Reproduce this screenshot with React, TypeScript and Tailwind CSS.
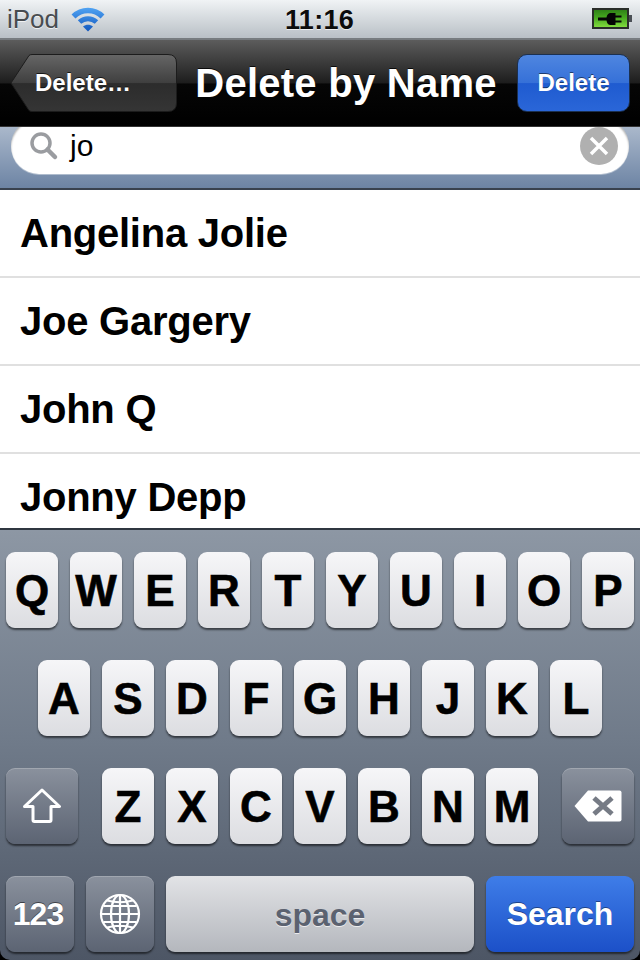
import React from 'react';

const sans = "font-['Liberation_Sans',Arial,sans-serif]";

const names = ['Angelina Jolie', 'Joe Gargery', 'John Q', 'Jonny Depp'];

const LetterKey = ({ label }: { label: string }) => (
  <div className="flex h-[76px] w-[52px] items-center justify-center rounded-[9px] bg-gradient-to-b from-[#f6f6f8] to-[#dcdde1] pt-[2px] text-[44px] font-bold leading-none text-black shadow-[0_2px_2px_rgba(0,0,0,0.55)] [-webkit-text-stroke:0.6px_#000]">
    {label}
  </div>
);

const GrayKey = ({ className, children }: { className: string; children: React.ReactNode }) => (
  <div
    className={`flex h-[76px] items-center justify-center rounded-[9px] bg-gradient-to-b from-[#8a919d] to-[#5c6473] shadow-[0_2px_2px_rgba(0,0,0,0.55),inset_0_1px_0_rgba(255,255,255,0.2)] ${className}`}
  >
    {children}
  </div>
);

const Wifi = () => (
  <svg width="34" height="25" viewBox="0 0 34 25" fill="none" className="ml-[12px]">
    <defs>
      <linearGradient id="wifi" gradientUnits="userSpaceOnUse" x1="0" y1="1" x2="0" y2="25">
        <stop offset="0" stopColor="#4fa2f2" />
        <stop offset="1" stopColor="#0f55bd" />
      </linearGradient>
    </defs>
    <path d="M2.5 9.5 C10.5 1.5 23.5 1.5 31.5 9.5" stroke="url(#wifi)" strokeWidth="5.5" />
    <path d="M8.5 15 C13.5 10.5 20.5 10.5 25.5 15" stroke="url(#wifi)" strokeWidth="5" />
    <path d="M12 19.5 C15 17 19 17 22 19.5 L17 24.5 Z" fill="url(#wifi)" />
  </svg>
);

const Battery = () => (
  <svg width="41" height="22" viewBox="0 0 41 22">
    <defs>
      <linearGradient id="batt" x1="0" y1="0" x2="0" y2="1">
        <stop offset="0" stopColor="#2c7d16" />
        <stop offset="0.45" stopColor="#46a81f" />
        <stop offset="1" stopColor="#86e040" />
      </linearGradient>
    </defs>
    <rect x="1" y="1" width="35" height="19" fill="url(#batt)" stroke="#2a2e2a" strokeWidth="2" />
    <rect x="37" y="7" width="3" height="7" fill="#4a4f55" />
    <path d="M6 9.5h8.5c0.5-3 2-4.5 4-4.5h5v2.5h6v2h-6v3h6v2h-6v2.5h-5c-2 0-3.5-1.500-4-4.500H6z" fill="#050505" />
  </svg>
);

const SearchIcon = () => (
  <svg width="30" height="30" viewBox="0 0 30 30" fill="none">
    <circle cx="12" cy="12" r="9" stroke="#9a9ca0" strokeWidth="3.5" />
    <path d="M18.5 18.5 L26 26" stroke="#9a9ca0" strokeWidth="4.5" strokeLinecap="round" />
  </svg>
);

const ShiftIcon = () => (
  <svg width="42" height="36" viewBox="0 0 42 36" fill="none">
    <path
      d="M21 2 L38.500 18.500 H30 V32 Q30 33.500 28.500 33.500 H13.500 Q12 33.500 12 32 V18.500 H3.500 Z"
      stroke="#fff"
      strokeWidth="3"
      strokeLinejoin="round"
    />
  </svg>
);

const BackspaceIcon = () => (
  <svg width="48" height="32" viewBox="0 0 48 32">
    <path d="M14 0.500 H45.500 a2 2 0 0 1 2 2 V29.500 a2 2 0 0 1 -2 2 H14 L0.500 16 Z" fill="#fff" />
    <path d="M20 8 L38 24 M38 8 L20 24" stroke="#767b85" strokeWidth="5" />
  </svg>
);

const GlobeIcon = () => (
  <svg width="42" height="42" viewBox="0 0 42 42" fill="none" stroke="#fff" strokeWidth="2.2">
    <circle cx="21" cy="21" r="19" />
    <ellipse cx="21" cy="21" rx="9" ry="19" />
    <path d="M21 2 V40 M2 21 H40 M4.500 13 H37.500 M4.500 29 H37.500 M8 7.500 Q21 11 34 7.500 M8 34.500 Q21 31 34 34.500" />
  </svg>
);

export default function App() {
  return (
    <div className={`${sans} flex h-[960px] w-[640px] flex-col overflow-hidden bg-black`}>
      {/* status bar */}
      <div className="relative flex h-[40px] shrink-0 items-center justify-between border-b-2 border-[#777c80] bg-gradient-to-b from-[#f0f3f5] to-[#b9c0c6] pl-[7px] pr-[7px]">
        <div className="flex items-center">
          <span className="text-[26px] leading-none text-[#484c50] [text-shadow:0_1px_0_rgba(255,255,255,0.7)]">iPod</span>
          <Wifi />
        </div>
        <span className="absolute left-[285px] top-[5px] text-[27px] font-bold leading-[30px] tracking-[0.3px] text-[#0c0c0c] [text-shadow:0_1px_0_rgba(255,255,255,0.7)]">
          11:16
        </span>
        <Battery />
      </div>

      {/* nav bar */}
      <div className="relative flex h-[86px] shrink-0 items-center justify-between bg-[linear-gradient(#5c5c5c_0%,#1d1d1d_50%,#060606_51%,#000_100%)] pl-[10px] pr-[10px]">
        <div className="relative flex h-[58px] w-[167px] items-center pl-[25px]">
          <svg className="absolute inset-0" width="167" height="58" viewBox="0 0 167 58">
            <defs>
              <linearGradient id="back" x1="0" y1="0" x2="0" y2="1">
                <stop offset="0" stopColor="#666666" />
                <stop offset="0.5" stopColor="#3f3f3f" />
                <stop offset="0.51" stopColor="#2c2c2c" />
                <stop offset="1" stopColor="#353535" />
              </linearGradient>
            </defs>
            <path
              d="M1 29 L19 1.500 Q20 0.500 22 0.500 H158 Q166.500 0.500 166.500 9 V49 Q166.500 57.500 158 57.500 H22 Q20 57.500 19 56.500 Z"
              fill="url(#back)"
              stroke="#1c1c1c"
              strokeWidth="1"
            />
          </svg>
          <span className="relative text-[24px] font-bold leading-none text-white [text-shadow:0_-1px_0_rgba(0,0,0,0.7)]">Delete…</span>
        </div>
        <span className="-ml-[2px] text-[40px] font-bold leading-none tracking-[0.25px] text-white [text-shadow:0_-1px_0_rgba(0,0,0,0.8)]">Delete by Name</span>
        <div className="flex h-[58px] w-[113px] items-center justify-center rounded-[10px] border border-[#1b3050] bg-[linear-gradient(#4f86e0_0%,#3570d8_50%,#1f5bd0_51%,#2a66d8_100%)] text-[24px] font-bold leading-none text-white [text-shadow:0_-1px_0_rgba(0,0,0,0.5)]">
          Delete
        </div>
      </div>

      {/* search field, scrolled part way under the nav bar */}
      <div className="h-[64px] shrink-0 overflow-hidden border-b-2 border-t border-b-[#39424f] border-t-[#333] bg-gradient-to-b from-[#aab8cb] to-[#6d84a4] px-[11px]">
        <div className="-mt-[9px] flex h-[56px] items-center rounded-[28px] bg-white pl-[18px] pr-[11px] shadow-[inset_0_2px_2px_rgba(0,0,0,0.3),0_1px_0_rgba(255,255,255,0.4)]">
          <SearchIcon />
          <span className="ml-[11px] flex-1 text-[30px] leading-none text-black">jo</span>
          <div className="flex h-[38px] w-[38px] items-center justify-center rounded-full bg-[#b0b0b0]">
            <svg width="22" height="22" viewBox="0 0 22 22">
              <path d="M3 3 L19 19 M19 3 L3 19" stroke="#fff" strokeWidth="3.5" />
            </svg>
          </div>
        </div>
      </div>

      {/* results */}
      <div className="flex-1 overflow-hidden bg-white">
        {names.map((name) => (
          <div
            key={name}
            className="flex h-[88px] items-center border-b-2 border-[#e0e0e0] pl-[20px] text-[40px] font-bold leading-none tracking-[-0.25px] text-black"
          >
            {name}
          </div>
        ))}
      </div>

      {/* keyboard */}
      <div className="flex h-[432px] shrink-0 flex-col gap-[32px] rounded-b-[10px] border-t-2 border-[#2f3640] bg-gradient-to-b from-[#8d97a4] via-[#6f7a89] to-[#4d5665] px-[6px] pb-[8px] pt-[22px]">
        <div className="flex gap-[12px]">
          {['Q', 'W', 'E', 'R', 'T', 'Y', 'U', 'I', 'O', 'P'].map((k) => (
            <LetterKey key={k} label={k} />
          ))}
        </div>
        <div className="flex justify-center gap-[12px]">
          {['A', 'S', 'D', 'F', 'G', 'H', 'J', 'K', 'L'].map((k) => (
            <LetterKey key={k} label={k} />
          ))}
        </div>
        <div className="flex justify-between">
          <GrayKey className="w-[72px]">
            <ShiftIcon />
          </GrayKey>
          <div className="flex gap-[12px]">
            {['Z', 'X', 'C', 'V', 'B', 'N', 'M'].map((k) => (
              <LetterKey key={k} label={k} />
            ))}
          </div>
          <GrayKey className="w-[72px]">
            <BackspaceIcon />
          </GrayKey>
        </div>
        <div className="flex gap-[12px]">
          <GrayKey className="w-[68px] pr-[4px] text-[32px] font-bold leading-none tracking-[-1px] text-white [text-shadow:0_-1px_0_rgba(0,0,0,0.5)]">
            123
          </GrayKey>
          <GrayKey className="w-[68px]">
            <GlobeIcon />
          </GrayKey>
          <div className="flex h-[76px] w-[308px] items-center justify-center rounded-[9px] bg-gradient-to-b from-[#e2e3e6] to-[#b4b7bd] pt-[2px] text-[32px] font-bold leading-none text-[#5b6270] shadow-[0_2px_2px_rgba(0,0,0,0.55)] [text-shadow:0_1px_0_rgba(255,255,255,0.7)]">
            space
          </div>
          <div className="flex h-[76px] w-[148px] items-center justify-center rounded-[9px] bg-gradient-to-b from-[#3f7de8] to-[#1c50c8] text-[32px] font-bold leading-none text-white shadow-[0_2px_2px_rgba(0,0,0,0.55)] [text-shadow:0_-1px_0_rgba(0,0,0,0.4)]">
            Search
          </div>
        </div>
      </div>
    </div>
  );
}
